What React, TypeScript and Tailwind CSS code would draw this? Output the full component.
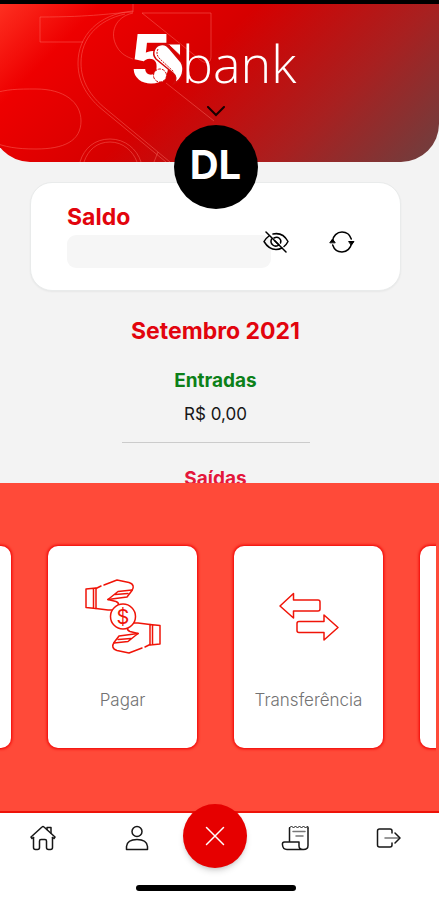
import type { ReactNode } from "react";

const actions = [
  { title: "Pagar", icon: <PayIcon /> },
  { title: "Transferência", icon: <TransferIcon /> },
];

function HeaderArt() {
  return (
    <svg
      aria-hidden="true"
      viewBox="-8 4 447 158"
      preserveAspectRatio="xMinYMin slice"
      className="absolute inset-0 h-full w-full rounded-b-[38px]"
      fill="none"
      stroke="#ff7a6e"
      strokeOpacity="0.42"
    >
      <path d="M133 4v8C112 13 94 17 40 17v25h43" />
      <path d="M133 11C98 14 78 36 78 63c0 20 10 35 26 48l62 51" />
      <path d="M125 14C98 20 81 38 81 63c0 18 9 33 25 46l64 53" />
      <path d="M133 13c-18 4-24 20-16 34 4 7 10 10 16 12" />
      <path d="M142 13h69v43c0 10-8 7-13 2L142 13z" />
      <path d="M166 83l48 38" />
      <path d="M-8 94c14-5 26-5 44-5 28 0 45 13 45 32 0 20-17 28-45 28-20 0-30-2-44-7" />
      <path d="M80 162c4-14 15-23 30-23s27 10 31 23" />
      <path d="M84 162c4-12 13-20 26-20s23 9 27 20" />
      <path d="M158 152l-4 10" />
    </svg>
  );
}

function Logo() {
  return (
    <svg
      role="img"
      aria-label="5S bank"
      width="164"
      height="54"
      viewBox="0 0 164 54"
      className="relative overflow-visible"
      fill="#fff"
    >
      <text x="-3" y="51" fontFamily="Roboto, sans-serif" fontWeight="900" fontSize="69">
        5
      </text>
      <path d="M30 12h16.500v12L35 13z" stroke="#d40a0a" />
      <path
        d="M28 12.500c4-.5 6 2 8 4.500l11 13c4 7 2 17-7 21.500 3-5 2-8-1-10.500L22 27c-5-6-1-14 6-14.500z"
        stroke="#d40a0a"
        strokeWidth="1.5"
      />
      <path d="M24 17c-2 4-1 7 2 10l14 13" fill="none" stroke="#d40a0a" strokeDasharray="2 1" />
      <circle cx="26" cy="43.500" r="6.500" stroke="#d40a0a" strokeDasharray="3 1" />
      <text x="48" y="51" fontFamily="'Open Sans', sans-serif" fontWeight="300" fontSize="52">
        bank
      </text>
    </svg>
  );
}

function Icon({
  width,
  height,
  children,
}: {
  width: number;
  height: number;
  children: ReactNode;
}) {
  return (
    <svg
      aria-hidden="true"
      width={width}
      height={height}
      viewBox={`0 0 ${width} ${height}`}
      fill="none"
      stroke="currentColor"
      strokeWidth="1.5"
      strokeLinecap="round"
      strokeLinejoin="round"
    >
      {children}
    </svg>
  );
}

function Hand() {
  return (
    <>
      <path d="M1 10l10-1v20.500l-10-1zM8.500 9.500v19.500" />
      <path d="M11 9.500l5-2.500M19 6L32 1l12 2.500c5 1.500 5 5 3 8L42 18l-19 2.500" />
      <path d="M47 11l-14 1.500-10 8M43 14.500l-13 1" />
      <path d="M23 20.500l8 2q3 1 2.500 4M11 29.500l12 1.500h6" />
    </>
  );
}

function PayIcon() {
  return (
    <Icon width={76} height={76}>
      <Hand />
      <g transform="rotate(180 38 37.500)">
        <Hand />
      </g>
      <circle cx="38" cy="37.500" r="12.500" fill="#fff" />
      <text
        x="38"
        y="45"
        textAnchor="middle"
        fontFamily="Inter, sans-serif"
        fontSize="20"
        fill="currentColor"
        stroke="none"
      >
        $
      </text>
    </Icon>
  );
}

function TransferIcon() {
  return (
    <Icon width={60} height={50}>
      <path d="M1 14L14.500 1.500V8H39q2 0 2 2v7q0 2-2 2H14.500v7z" />
      <path d="M59 35.500L45 23v6.500H20q-2 0-2 2v7q0 2 2 2h25V48z" />
    </Icon>
  );
}

function NavButton({ label, children }: { label: string; children: ReactNode }) {
  return (
    <button type="button" aria-label={label} className="mt-3 text-neutral-900">
      {children}
    </button>
  );
}

function ActionCard({ title, icon }: { title?: string; icon?: ReactNode }) {
  return (
    <button
      type="button"
      aria-label={title ?? "Mais opções"}
      className="flex h-[202px] w-[149px] shrink-0 flex-col items-center rounded-[10px] bg-white pt-[33px] shadow-[0_0_3px_1px_#f00000]"
    >
      <span className="flex h-[76px] items-center text-[#f01408]">{icon}</span>
      <span className="mt-[33px] text-[17px] leading-6 font-light text-neutral-500">{title}</span>
    </button>
  );
}

export default function App() {
  return (
    <div className="flex h-screen flex-col overflow-hidden border-t-4 border-black bg-[#f3f3f3] font-['Inter',sans-serif]">
      <main className="min-h-0 flex-1 overflow-hidden pr-2">
        <header className="relative z-10 -mx-2 flex flex-col items-center rounded-b-[38px] bg-[linear-gradient(135deg,#ff3323_0%,#ee0000_18%,#d60000_44%,#a82020_73%,#6c4040_100%)] pt-7">
          <HeaderArt />
          <Logo />
          <button type="button" aria-label="Abrir menu" className="relative mt-5">
            <svg
              width="20"
              height="12"
              viewBox="0 0 20 12"
              fill="none"
              stroke="#160000"
              strokeWidth="2"
              strokeLinecap="round"
            >
              <path d="M2 1l8 8 8-8" />
            </svg>
          </button>
          <div className="relative mt-[7px] -mb-[47px] flex size-[84px] items-center justify-center rounded-full bg-black pb-1 text-[40px] leading-none font-bold text-white">
            DL
          </div>
        </header>

        <section className="mx-[30px] mt-5 rounded-[22px] border border-[#e9ebeb] bg-white pt-5 pr-[45px] pb-[22px] pl-9 shadow-xs">
          <h2 className="text-[23px] leading-7 font-bold text-[#e2040d]">Saldo</h2>
          <div className="mt-1 flex items-start">
            <div className="h-[33px] flex-1 rounded-[9px] bg-[#f6f6f6]" />
            <button type="button" aria-label="Mostrar saldo" className="-mt-1 -ml-2">
              <Icon width={26} height={22}>
                <path d="M6 5C4 6.500 2 8.500 1 10.500c3 5 7 8 12 8 2 0 4-.5 6-1.500M10 3c7-1.500 12 2 15 7.500-1 2-2 3.500-4 5" />
                <path d="M8.500 8c-2 5 3 9 7.500 6M11 7c4-2 8 1 6.500 5M12 10l3 3" />
                <path d="M3 1l20 20" />
              </Icon>
            </button>
            <button type="button" aria-label="Atualizar saldo" className="-mt-1 ml-10">
              <Icon width={26} height={22}>
                <path d="M3.500 10C4 5 8 1 13 1c4.500 0 8 3 9.300 7M22.500 12c-.5 5-4.500 9-9.500 9-4.500 0-8-3-9.300-7" />
                <path d="M1 11.500l2.500-3.500L6 11.500zM20 10.500h5L22.500 14z" fill="currentColor" strokeWidth="1" />
              </Icon>
            </button>
          </div>
        </section>

        <section className="mt-[26px] flex flex-col items-center">
          <h2 className="text-[23px] leading-7 font-bold text-[#e2040d]">Setembro 2021</h2>
          <h3 className="mt-6 text-[19px] leading-6 font-bold text-[#0c8018]">Entradas</h3>
          <p className="mt-[9px] text-[17px] leading-6 text-neutral-900">R$ 0,00</p>
          <hr className="mt-4 w-[188px] border-[#cbcbcb]" />
          <h3 className="mt-6 text-[19px] leading-6 font-bold text-[#e4173b]">Saídas</h3>
        </section>
      </main>

      <section className="border-b-2 border-[#ee1208] bg-[#ff4a39]">
        <div className="mr-[3px] flex justify-center gap-[37px] overflow-hidden py-[63px] pr-[5px]">
          <ActionCard />
          {actions.map((action) => (
            <ActionCard key={action.title} title={action.title} icon={action.icon} />
          ))}
          <ActionCard />
        </div>
      </section>

      <footer className="bg-white pr-2 pb-[9px]">
        <nav className="flex items-start justify-center gap-[34px]">
          <div className="flex gap-[69px]">
            <NavButton label="Início">
              <Icon width={26} height={26}>
                <path d="M3.500 12.500L2 13.500l-1-1.500L12 2q1-1 2 0l11 10-1 1.500-1.500-1" />
                <path d="M3.500 12.500v10q0 2 2 2h2q2 0 2-2V16q0-1.500 1.500-1.500h4q1.500 0 1.500 1.500v6.500q0 2 2 2h2q2 0 2-2v-10" />
                <path d="M17 4.500V2.500h4V8" />
              </Icon>
            </NavButton>
            <NavButton label="Perfil">
              <Icon width={24} height={26}>
                <circle cx="12" cy="6.500" r="5" />
                <path d="M1.500 24.500v-3C2 17 6 14.500 12 14.500S22 17 22.500 21.500v3z" />
              </Icon>
            </NavButton>
          </div>
          <button
            type="button"
            aria-label="Fechar"
            className="relative -mt-[9px] flex size-16 items-center justify-center rounded-full bg-[#e60000] text-white shadow-md shadow-black/15"
          >
            <Icon width={20} height={20}>
              <path d="M1.500 1.500l17 17M18.500 1.500l-17 17" />
            </Icon>
          </button>
          <div className="flex gap-[67px]">
            <NavButton label="Extrato">
              <Icon width={28} height={26}>
                <path d="M8.500 16V3M27 3v17.500q0 4-4.500 4H6q-4 0-4.500-4.500-.5-3 2-3H18v4q0 3.500 4 3.500" />
                <path d="M8.500 2.500l2-1 2 1 2-1 2 1 2-1 2 1 2-1 2 1 2.500-1V3" strokeWidth="1" />
                <path d="M12 6.500h12M15 11h7" stroke="#777" />
              </Icon>
            </NavButton>
            <NavButton label="Sair">
              <Icon width={25} height={26}>
                <path d="M16 8V6q0-2-2-2H3.500q-2 0-2 2v14q0 2 2 2H14q2 0 2-2v-2" />
                <path d="M9 13h14" stroke="#777" />
                <path d="M19 8l5 5-5 5" />
              </Icon>
            </NavButton>
          </div>
        </nav>
        <div className="mx-auto mt-[17px] h-[6px] w-40 rounded-full bg-black" />
      </footer>
    </div>
  );
}
